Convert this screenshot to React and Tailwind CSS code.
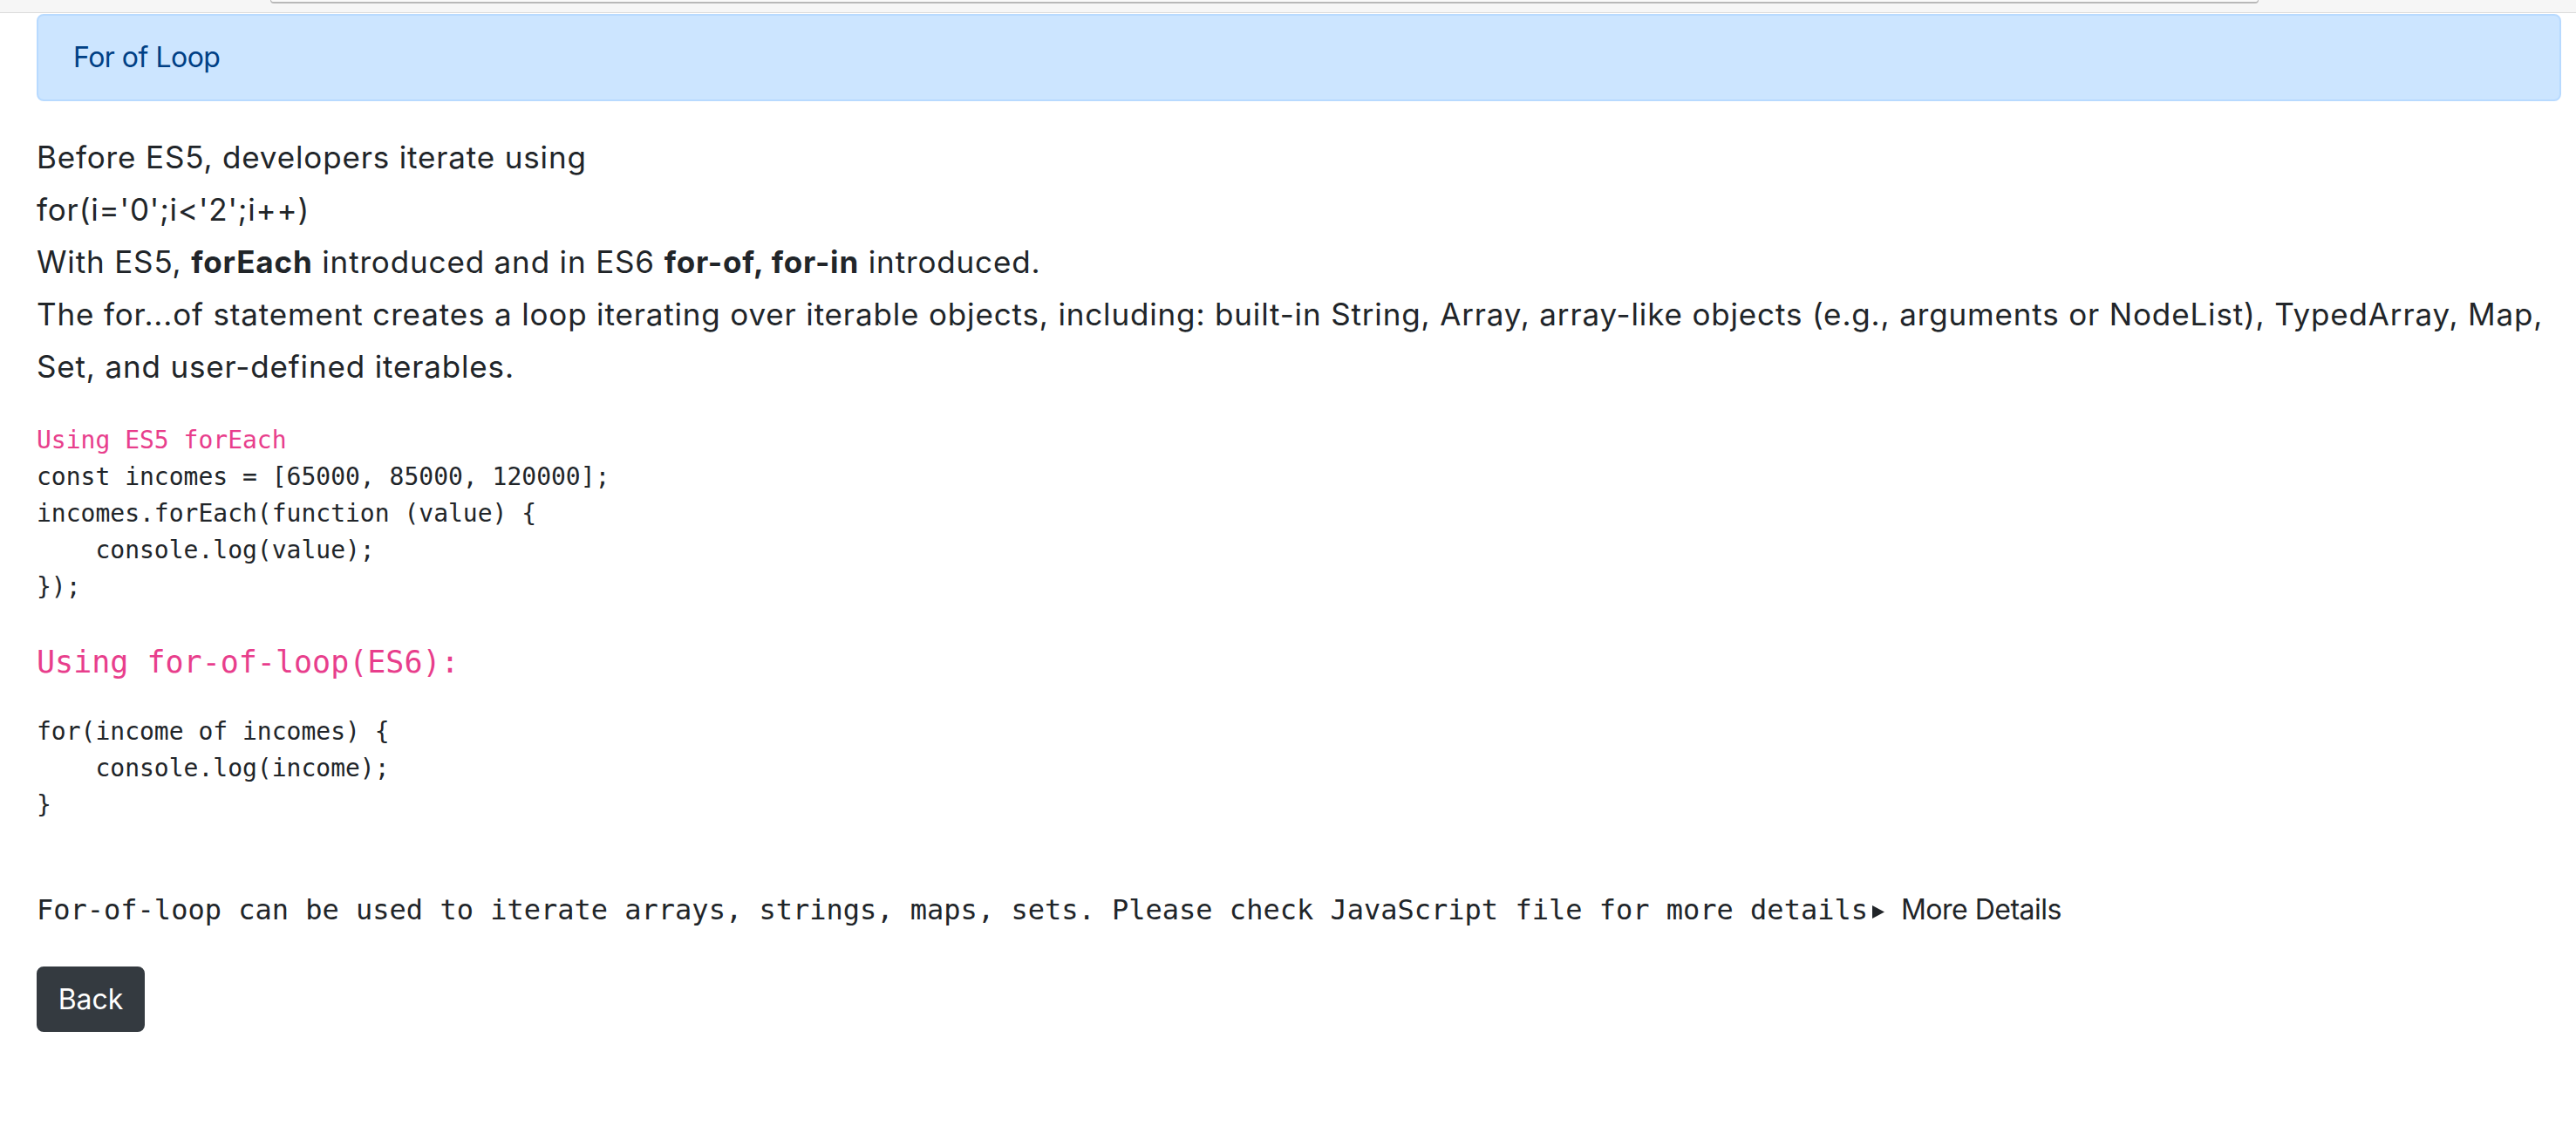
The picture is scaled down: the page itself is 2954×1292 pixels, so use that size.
import React from "react";

const sans = { fontFamily: "Inter, 'Noto Sans', sans-serif" };

export default function App() {
  return (
    <div className="min-h-[1292px] w-full bg-white text-[#212529] font-['Inter',_'Noto_Sans',_sans-serif]">
      <div className="h-[15px] bg-[#f6f6f6] border-b border-[#dcdcdc]">
        <div className="ml-[310px] w-[2280px] h-[4px] bg-[#fafafa] border-x border-b-2 border-[#b8b8b8] rounded-b-[6px]" />
      </div>
      <div className="pl-[42px] pr-[17px] pt-px">
        <div className="rounded-[8px] border-2 border-[#b8daff] bg-[#cce5ff] px-[40px] py-[24px] text-[32px] leading-[48px] tracking-[-0.5px] text-[#004085]">
          For of Loop
        </div>

        <p className="mt-[34px] text-[35px] leading-[60px] tracking-[0.85px]">
          Before ES5, developers iterate using
          <br />
          for(i='0';i&lt;'2';i++)
          <br />
          With ES5, <b className="font-bold">forEach</b> introduced and in ES6{" "}
          <b className="font-bold">for-of, for-in</b> introduced.
          <br />
          The for...of statement creates a loop iterating over iterable objects, including: built-in String, Array,
          array-like objects (e.g., arguments or NodeList), TypedArray, Map,
          <br />
          Set, and user-defined iterables.
        </p>

        <pre className="mt-[34px] font-['DejaVu_Sans_Mono',_'Liberation_Mono',_monospace] text-[28px] leading-[42px] text-[#212529]">
          <span className="text-[#e83e8c]">Using ES5 forEach</span>
          {"\n"}
          {"const incomes = [65000, 85000, 120000];\nincomes.forEach(function (value) {\n    console.log(value);\n});"}
        </pre>

        <div className="mt-[39px] font-['DejaVu_Sans_Mono',_'Liberation_Mono',_monospace] text-[35px] leading-[52px] text-[#e83e8c] whitespace-pre">
          Using for-of-loop(ES6):
        </div>

        <pre className="mt-[33px] font-['DejaVu_Sans_Mono',_'Liberation_Mono',_monospace] text-[28px] leading-[42px] text-[#212529]">
          {"for(income of incomes) {\n    console.log(income);\n}"}
        </pre>

        <div className="mt-[75px] text-[32px] leading-[48px] whitespace-nowrap">
          <span className="font-['DejaVu_Sans_Mono',_'Liberation_Mono',_monospace]">
            For-of-loop can be used to iterate arrays, strings, maps, sets. Please check JavaScript file for more details
          </span>
          <svg
            className="inline-block ml-[5px] align-[1px]"
            width="14"
            height="15"
            viewBox="0 0 14 15"
            aria-hidden="true"
          >
            <path d="M0 0 L14 7.5 L0 15 Z" fill="#212529" />
          </svg>
          <span className="ml-[19px] tracking-[-0.5px]" style={sans}>
            More Details
          </span>
        </div>

        <button className="mt-[41px] flex h-[75px] w-[124px] items-center justify-center rounded-[8px] border-2 border-[#343a40] bg-[#343a40] text-[32px] leading-[48px] text-white">
          Back
        </button>
      </div>
    </div>
  );
}
